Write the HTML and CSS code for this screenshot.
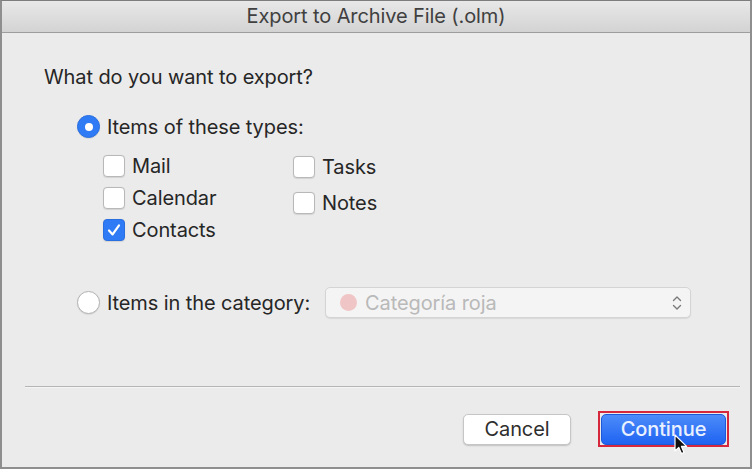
FILE: index.html
```html
<!DOCTYPE html>
<html>
<head>
<meta charset="utf-8">
<link rel="stylesheet" href="styles.css">
</head>
<body>
<div class="window">
  <div class="titlebar">Export to Archive File (.olm)</div>
  <div class="content">
    <div class="question">What do you want to export?</div>
    <div class="radio-row first">
      <span class="radio on"></span>
      <span class="label">Items of these types:</span>
    </div>
    <div class="types">
      <div class="col left">
        <div class="check-row"><span class="box"></span><span class="label">Mail</span></div>
        <div class="check-row"><span class="box"></span><span class="label">Calendar</span></div>
        <div class="check-row"><span class="box checked"><svg viewBox="0 0 20 20" width="20" height="20"><path d="M5 10.5 L8.6 14.4 L15 5.4" fill="none" stroke="#fff" stroke-width="2.2" stroke-linecap="round" stroke-linejoin="round"/></svg></span><span class="label">Contacts</span></div>
      </div>
      <div class="col right">
        <div class="check-row"><span class="box"></span><span class="label">Tasks</span></div>
        <div class="check-row"><span class="box"></span><span class="label">Notes</span></div>
      </div>
    </div>
    <div class="radio-row second">
      <span class="radio"></span>
      <span class="label">Items in the category:</span>
      <div class="popup">
        <span class="dot"></span>
        <span class="popup-text">Categoría roja</span>
        <svg class="chev" viewBox="0 0 10 18" width="10" height="18"><path d="M1.5 6.5 L5 3 L8.5 6.5 M1.5 11.5 L5 15 L8.5 11.5" fill="none" stroke="#7a7a7a" stroke-width="1.4" stroke-linecap="round" stroke-linejoin="round"/></svg>
      </div>
    </div>
  </div>
  <div class="separator"></div>
  <div class="buttons">
    <button class="btn cancel">Cancel</button>
    <div class="focus-ring"><button class="btn primary">Continue</button></div>
  </div>
  <svg class="cursor" viewBox="0 0 14 22" width="14" height="22"><path d="M1 1 L1 17 L4.8 13.4 L7.4 19.6 L10 18.5 L7.5 12.4 L12.6 12.4 Z" fill="#111" stroke="#fff" stroke-width="1.2" stroke-linejoin="round"/></svg>
</div>
</body>
</html>
```
FILE: styles.css
```css
* { box-sizing: border-box; }
html, body { margin: 0; padding: 0; }
body {
  width: 752px;
  height: 469px;
  overflow: hidden;
  font-family: "Inter", "Roboto", "Liberation Sans", sans-serif;
  color: #262626;
  background: #ebebeb;
}
.window {
  position: relative;
  width: 752px;
  height: 469px;
  background: #ebebeb;
  border: 2px solid #8e8e8e;
  border-top: 1px solid #7d7d7d;
  display: flex;
  flex-direction: column;
}
.titlebar {
  height: 32px;
  flex: none;
  background: linear-gradient(#e8e8e8, #d3d3d3);
  border-bottom: 1px solid #9d9d9d;
  text-align: center;
  font-size: 20px;
  line-height: 31px;
  color: #404040;
  letter-spacing: -0.1px;
}
.content {
  padding-left: 42px;
  flex: none;
}
.question {
  margin-top: 33px;
  font-size: 20px;
  line-height: 22px;
  letter-spacing: -0.1px;
}
.label {
  font-size: 20px;
  line-height: 22px;
  letter-spacing: -0.1px;
}
.radio-row {
  display: flex;
  align-items: center;
  height: 23px;
}
.radio-row.first {
  margin-top: 27px;
  margin-left: 33px;
}
.radio {
  width: 23px;
  height: 23px;
  border-radius: 50%;
  background: #fff;
  border: 1px solid #b4b4b4;
  box-shadow: 0 0.5px 1px rgba(0,0,0,0.12);
  margin-right: 7px;
  flex: none;
  position: relative;
}
.radio.on {
  background: #2f7bf5;
  border-color: #2a6fe0;
}
.radio.on::after {
  content: "";
  position: absolute;
  left: 6.5px;
  top: 6.5px;
  width: 8px;
  height: 8px;
  border-radius: 50%;
  background: #fff;
}
.types {
  display: flex;
  margin-left: 59px;
  margin-top: 17px;
}
.col {
  display: flex;
  flex-direction: column;
}
.col.left { gap: 10px; width: 190px; }
.col.right { gap: 14px; margin-top: 1px; }
.check-row {
  display: flex;
  align-items: center;
  height: 22px;
}
.box {
  width: 22px;
  height: 22px;
  border-radius: 4px;
  background: #fff;
  border: 1px solid #b8b8b8;
  box-shadow: 0 0.5px 1px rgba(0,0,0,0.1);
  margin-right: 7px;
  flex: none;
  display: flex;
  align-items: center;
  justify-content: center;
}
.box.checked {
  background: #2f7bf5;
  border-color: #2a6fe0;
}
.box svg { display: block; }
.radio-row.second {
  margin-top: 46px;
  margin-left: 33px;
  height: 31px;
}
.popup {
  margin-left: 15px;
  width: 366px;
  height: 31px;
  background: #f4f4f4;
  border: 1px solid #d4d4d4;
  border-radius: 5px;
  box-shadow: 0 1px 1px rgba(0,0,0,0.08);
  display: flex;
  align-items: center;
  padding-left: 14px;
  padding-right: 8px;
}
.dot {
  width: 17px;
  height: 17px;
  border-radius: 50%;
  background: #f0c5c6;
  margin-right: 8px;
  flex: none;
}
.popup-text {
  font-size: 20px;
  color: #b9b9b9;
  flex: 1;
  letter-spacing: -0.1px;
}
.chev { flex: none; }
.separator {
  margin-top: 68px;
  margin-left: 23px;
  margin-right: 10px;
  height: 2px;
  background: #b5b5b5;
  border-bottom: 1px solid #f4f4f4;
  flex: none;
}
.buttons {
  display: flex;
  justify-content: flex-end;
  align-items: center;
  padding-right: 21px;
  margin-top: 23px;
  gap: 27px;
}
.btn {
  font-family: inherit;
  font-size: 20px;
  height: 31px;
  border-radius: 5px;
  padding: 0;
  letter-spacing: -0.1px;
}
.cancel {
  width: 108px;
  background: #fff;
  border: 1px solid #c6c6c6;
  box-shadow: 0 1px 1.5px rgba(0,0,0,0.18);
  color: #2e2e2e;
}
.focus-ring {
  border: 2px solid #d6283d;
  padding: 0;
  width: 131px;
  height: 36px;
  display: flex;
  align-items: center;
  justify-content: center;
}
.primary {
  width: 125px;
  height: 31px;
  background: linear-gradient(#4d8cfa, #1f63f2);
  border: 1px solid #1c58d8;
  color: #eaf1ff;
  font-weight: 500;
}
.cursor {
  position: absolute;
  left: 672px;
  top: 433px;
}
```
